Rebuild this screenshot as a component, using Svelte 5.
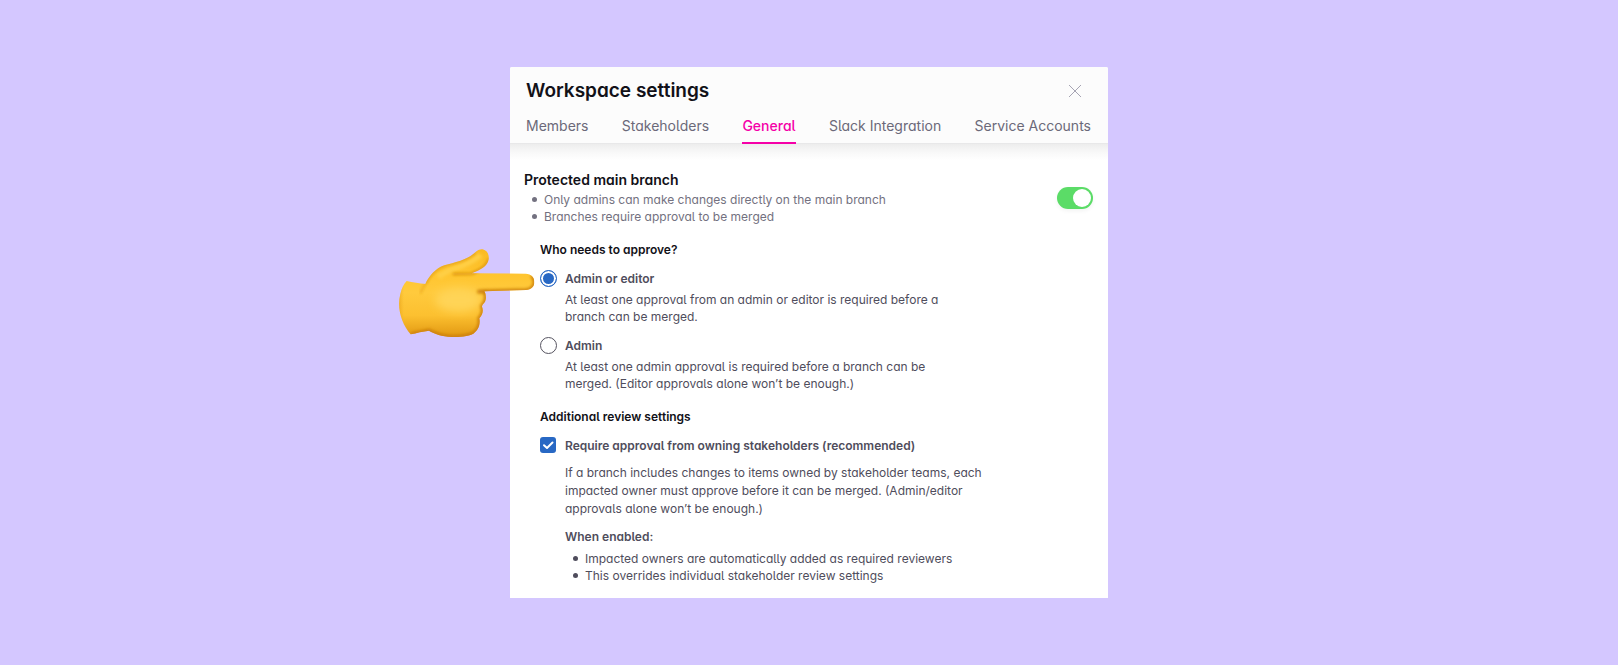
<script>
  const tabs = ['Members', 'Stakeholders', 'General', 'Slack Integration', 'Service Accounts'];
  let active = $state('General');
  let isProtected = $state(true);
  let approver = $state('editor');
  let requireOwners = $state(true);
</script>

<main>
  <section class="card" aria-labelledby="title">
    <header>
      <div class="title-row">
        <h1 id="title">Workspace settings</h1>
        <button class="close" aria-label="Close">
          <svg viewBox="0 0 14 14" width="14" height="14"><path d="M1 1 13 13M13 1 1 13" /></svg>
        </button>
      </div>
      <nav>
        {#each tabs as tab}
          <button class="tab" class:active={tab === active} onclick={() => (active = tab)}>{tab}</button>
        {/each}
      </nav>
    </header>

    <div class="content">
      <div class="protect">
        <div>
          <h2><label for="protected">Protected main branch</label></h2>
          <ul>
            <li>Only admins can make changes directly on the main branch</li>
            <li>Branches require approval to be merged</li>
          </ul>
        </div>
        <input id="protected" class="switch" type="checkbox" role="switch" bind:checked={isProtected} />
      </div>

      <div class="settings">
        <h3 id="who">Who needs to approve?</h3>
        <div class="options" role="radiogroup" aria-labelledby="who">
          <div class="option">
            <svg class="hand" viewBox="0 0 480 330" aria-hidden="true">
              <defs>
                <linearGradient id="skin" x1="0" y1="0" x2="0" y2="1">
                  <stop offset="0" stop-color="#f9b920" />
                  <stop offset=".3" stop-color="#ffc52f" />
                  <stop offset=".5" stop-color="#ffca3d" />
                  <stop offset=".75" stop-color="#fcc030" />
                  <stop offset="1" stop-color="#df950f" />
                </linearGradient>
                <linearGradient id="edge" x1="0" y1="0" x2="1" y2="0">
                  <stop offset="0" stop-color="#dc9411" stop-opacity=".8" />
                  <stop offset=".08" stop-color="#f0aa1c" stop-opacity="0" />
                </linearGradient>
                <filter id="soft" x="-20%" y="-50%" width="140%" height="200%"><feGaussianBlur stdDeviation="4" /></filter>
                <filter id="wide" x="-30%" y="-80%" width="160%" height="260%"><feGaussianBlur stdDeviation="12" /></filter>
                <clipPath id="shape">
                  <path d="M50 123C68 128 89 130 106 132C116 110 137 84 163 76C198 66 231 60 256 37C263 30 270 27 278 28C291 31 298 43 296 58C293 79 270 91 245 100L407 101C424 102 433 112 433 126C433 140 424 149 408 150L283 154C288 162 290 178 284 187C278 194 276 196 276 200C281 212 278 224 268 235C272 254 264 272 250 281C233 290 211 291 185 291C155 289 134 282 117 272C99 274 79 279 62 283C35 253 20 205 31 162C35 145 41 132 50 123Z" />
                </clipPath>
              </defs>
              <g clip-path="url(#shape)">
                <rect x="20" y="20" width="420" height="275" fill="url(#skin)" />
                <rect x="20" y="100" width="275" height="195" fill="url(#edge)" />
                <ellipse cx="205" cy="180" rx="70" ry="36" fill="#ffd457" filter="url(#wide)" />
                <path d="M245 124H412" fill="none" stroke="#ffd04a" stroke-width="14" stroke-linecap="round" filter="url(#soft)" />
                <path d="M145 112C172 83 226 86 272 45" fill="none" stroke="#ffcf45" stroke-width="17" filter="url(#soft)" />
                <path d="M106 132C116 110 137 84 163 76C198 66 231 60 256 37" fill="none" stroke="#db9715" stroke-width="6" filter="url(#soft)" />
                <path d="M296 56C294 79 270 91 245 101L188 102" fill="none" stroke="#dc920e" stroke-width="7" filter="url(#soft)" />
                <path d="M245 99H410" fill="none" stroke="#eba51a" stroke-width="7" filter="url(#soft)" />
                <path d="M283 154C288 162 290 178 284 187C278 194 276 196 276 200C281 212 278 224 268 235C272 254 264 272 250 281C233 290 211 291 185 291C155 289 134 282 117 272L62 283" fill="none" stroke="#cc7f0a" stroke-width="11" filter="url(#soft)" />
                <path d="M106 132C98 143 95 151 91 160" fill="none" stroke="#eaa51b" stroke-width="5" filter="url(#soft)" />
                <path d="M425 106C442 124 433 149 408 151L262 155" fill="none" stroke="#cb7e08" stroke-width="11" filter="url(#soft)" />
              </g>
            </svg>
            <input id="editor" type="radio" name="approver" value="editor" bind:group={approver} />
            <div>
              <label for="editor">Admin or editor</label>
              <p>At least one approval from an admin or editor is required before a branch can be merged.</p>
            </div>
          </div>
          <div class="option">
            <input id="admin" type="radio" name="approver" value="admin" bind:group={approver} />
            <div>
              <label for="admin">Admin</label>
              <p>At least one admin approval is required before a branch can be merged. (Editor approvals alone won’t be enough.)</p>
            </div>
          </div>
        </div>

        <h3>Additional review settings</h3>
        <div class="option review">
          <span class="box">
            <input id="owners" type="checkbox" bind:checked={requireOwners} />
            <svg viewBox="0 0 16 16" aria-hidden="true"><path d="M4 8.2 7 11 12.5 5.5" /></svg>
          </span>
          <div>
            <label for="owners">Require approval from owning stakeholders (recommended)</label>
            <p>If a branch includes changes to items owned by stakeholder teams, each impacted owner must approve before it can be merged. (Admin/editor approvals alone won’t be enough.)</p>
            <h4>When enabled:</h4>
            <ul>
              <li>Impacted owners are automatically added as required reviewers</li>
              <li>This overrides individual stakeholder review settings</li>
            </ul>
          </div>
        </div>
      </div>
    </div>
  </section>
</main>

<style>
  :global(body) {
    margin: 0;
    background: #d4c7ff;
  }
  main {
    box-sizing: border-box;
    min-height: 100vh;
    padding: 24px;
    display: grid;
    place-items: center;
    font-family: Inter, 'Liberation Sans', sans-serif;
    font-feature-settings: 'cv11', 'cv05';
    font-size: 12px;
    line-height: 17px;
    color: #4f4d5c;
  }
  .card {
    width: 100%;
    max-width: 598px;
    background: #fff;
    border-radius: 2px 2px 0 0;
  }
  header {
    padding: 11px 17px 0 16px;
    background: #fcfcfc;
    border-bottom: 1px solid #e8e8e9;
    border-radius: 2px 2px 0 0;
  }
  .title-row {
    display: flex;
    justify-content: space-between;
    align-items: center;
  }
  h1, h2, h3, h4, p, ul {
    margin: 0;
  }
  h1 {
    font-size: 19px;
    line-height: 26px;
    font-weight: 600;
    color: #121118;
  }
  button {
    padding: 0;
    border: 0;
    background: none;
    font: inherit;
    font-feature-settings: inherit;
    color: inherit;
    cursor: pointer;
  }
  .close {
    display: grid;
    place-items: center;
    width: 32px;
    height: 24px;
  }
  .close path {
    fill: none;
    stroke: #a6a4b3;
    stroke-width: 1;
  }
  nav {
    display: flex;
    justify-content: space-between;
    margin: 10px 0 -1px;
  }
  .tab {
    padding: 2px 0 6px;
    border-bottom: 2px solid transparent;
    font-size: 14px;
    line-height: 20px;
    color: #6b6979;
  }
  .tab.active {
    color: #f500a8;
    border-color: #f500a8;
    font-weight: 500;
  }
  .content {
    padding: 26px 15px 14px 14px;
    background: linear-gradient(#ededed, #f8f8f8 8px, #fff 16px);
  }
  .protect {
    display: flex;
    justify-content: space-between;
    align-items: center;
    color: #737180;
  }
  h2 {
    margin-bottom: 1px;
    font-size: 14px;
    line-height: 20px;
    font-weight: 600;
    color: #121118;
  }
  ul {
    padding-left: 8px;
    list-style: none;
  }
  li {
    display: flex;
    align-items: center;
    gap: 7px;
  }
  li::before {
    content: '';
    flex: none;
    width: 5px;
    height: 5px;
    border-radius: 50%;
    background: currentColor;
  }
  .switch {
    appearance: none;
    width: 36px;
    height: 22px;
    margin: 0;
    padding: 2px;
    border-radius: 11px;
    background: #c9c8d0;
    display: flex;
    cursor: pointer;
    box-shadow: 0 2px 4px #0000000d;
  }
  .switch::before {
    content: '';
    width: 18px;
    height: 18px;
    border-radius: 50%;
    background: #fff;
  }
  .switch:checked {
    background: #5bdc67;
    justify-content: flex-end;
  }
  .settings {
    padding: 16px 16px 0;
  }
  h3 {
    font-size: 12px;
    line-height: 17px;
    font-weight: 600;
    color: #121118;
  }
  .options {
    display: grid;
    gap: 12px;
    margin: 12px 0 16px;
  }
  .option {
    position: relative;
    display: flex;
    align-items: flex-start;
    gap: 8px;
  }
  .option p {
    max-width: 400px;
    margin-top: 4px;
  }
  .option label,
  h4 {
    display: block;
    font-size: 12px;
    font-weight: 600;
    line-height: 17px;
  }
  input[type='radio'] {
    appearance: none;
    flex: none;
    box-sizing: border-box;
    width: 17px;
    height: 17px;
    margin: 0;
    border: 1px solid #55535f;
    border-radius: 50%;
    background: #fff;
  }
  input[type='radio']:checked {
    border-color: #2868c4;
    background: #2868c4;
    box-shadow: inset 0 0 0 2px #fff;
  }
  .box {
    flex: none;
    display: grid;
    width: 17px;
    height: 17px;
  }
  .box > * {
    grid-area: 1 / 1;
  }
  .box input {
    appearance: none;
    width: 16px;
    height: 16px;
    margin: 0;
    border-radius: 3px;
    background: #2868c4;
  }
  .box svg {
    width: 16px;
    height: 16px;
    pointer-events: none;
  }
  .box path {
    fill: none;
    stroke: #fff;
    stroke-width: 2;
    stroke-linecap: round;
    stroke-linejoin: round;
  }
  .review {
    margin-top: 12px;
  }
  .option.review p {
    max-width: 430px;
    margin: 10px 0;
    line-height: 18px;
  }
  h4 {
    margin-bottom: 5px;
  }
  .hand {
    position: absolute;
    left: -150px;
    top: -30px;
    width: 160px;
    height: 110px;
    pointer-events: none;
  }
</style>
